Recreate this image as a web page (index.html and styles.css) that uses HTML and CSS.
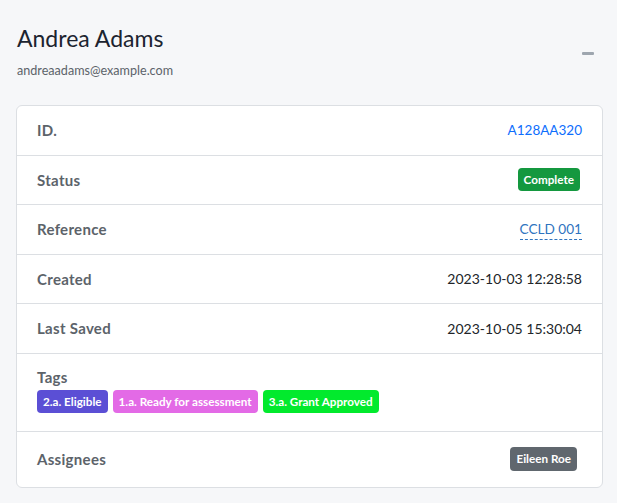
FILE: index.html
```html
<!DOCTYPE html>
<html lang="en">
<head>
  <meta charset="UTF-8">
  <meta name="viewport" content="width=device-width, initial-scale=1.0">
  <title>Andrea Adams</title>
  <link rel="stylesheet" href="styles.css">
</head>
<body>
  <div class="page">
    <div class="header">
      <div>
        <h1 class="name">Andrea Adams</h1>
        <div class="email">andreaadams@example.com</div>
      </div>
      <button class="collapse-btn" aria-label="Collapse"><span class="dash"></span></button>
    </div>

    <div class="details-card">
      <div class="row">
        <span class="label">ID.</span>
        <a class="link" href="#">A128AA320</a>
      </div>
      <div class="row">
        <span class="label">Status</span>
        <span class="badge badge-complete">Complete</span>
      </div>
      <div class="row">
        <span class="label">Reference</span>
        <a class="ref-link" href="#">CCLD 001</a>
      </div>
      <div class="row">
        <span class="label">Created</span>
        <span class="value">2023-10-03 12:28:58</span>
      </div>
      <div class="row">
        <span class="label">Last Saved</span>
        <span class="value">2023-10-05 15:30:04</span>
      </div>
      <div class="row row-stack">
        <span class="label">Tags</span>
        <div class="tags">
          <span class="badge tag-eligible">2.a. Eligible</span>
          <span class="badge tag-ready">1.a. Ready for assessment</span>
          <span class="badge tag-approved">3.a. Grant Approved</span>
        </div>
      </div>
      <div class="row row-last">
        <span class="label">Assignees</span>
        <span class="badge badge-user">Eileen Roe</span>
      </div>
    </div>
  </div>
</body>
</html>
```

FILE: styles.css
```css
body {
  margin: 0;
  background: #f6f7f9;
  font-family: 'Lato', 'Open Sans', sans-serif;
  color: #212529;
}

.page {
  padding: 22px 14px 14px 16px;
}

.header {
  display: flex;
  justify-content: space-between;
  align-items: center;
  padding-left: 1px;
  margin-bottom: 27px;
}

.name {
  margin: 0;
  font-size: 23px;
  font-weight: 400;
  line-height: 32px;
  color: #1c2430;
}

.email {
  margin-top: 9px;
  font-size: 12.6px;
  color: #5c636a;
}

.collapse-btn {
  background: none;
  border: none;
  padding: 8px 9px 8px 8px;
  margin-top: 6px;
  cursor: pointer;
}

.dash {
  display: block;
  width: 12px;
  height: 3px;
  border-radius: 1px;
  background: #9ea6af;
}

.details-card {
  background: #ffffff;
  border: 1px solid #dcdfe3;
  border-radius: 6px;
}

.row {
  display: flex;
  justify-content: space-between;
  align-items: center;
  padding: 12px 20px;
  min-height: 24.5px;
  border-bottom: 1px solid #dcdfe3;
  font-size: 14px;
}

.row-last {
  border-bottom: none;
  padding: 15px 25px 15px 20px;
}

.row-stack {
  flex-direction: column;
  align-items: flex-start;
  padding: 11px 20px 18px;
}

.label {
  font-size: 15px;
  line-height: 24.5px;
  font-weight: 700;
  letter-spacing: 0.3px;
  color: #5c636a;
}

.value {
  color: #212529;
}

.link {
  font-size: 13.5px;
  color: #0d6efd;
  text-decoration: none;
}

.ref-link {
  font-size: 13.6px;
  color: #2f74c0;
  text-decoration: none;
  border-bottom: 1px dashed #2f74c0;
  line-height: 20px;
}

.badge {
  display: inline-block;
  font-size: 11.7px;
  font-weight: 700;
  color: #ffffff;
  padding: 5px 6px;
  border-radius: 4px;
  line-height: 13px;
}

.badge-complete {
  background: #14983f;
  margin-right: 2px;
}

.badge-user {
  background: #60676e;
  padding: 5px 6px 6px;
}

.tags {
  display: flex;
  gap: 5px;
  margin-top: 1px;
}

.tag-eligible {
  background: #5b4fd5;
}

.tag-ready {
  background: #e36ae6;
}

.tag-approved {
  background: #02ea2d;
}
```
